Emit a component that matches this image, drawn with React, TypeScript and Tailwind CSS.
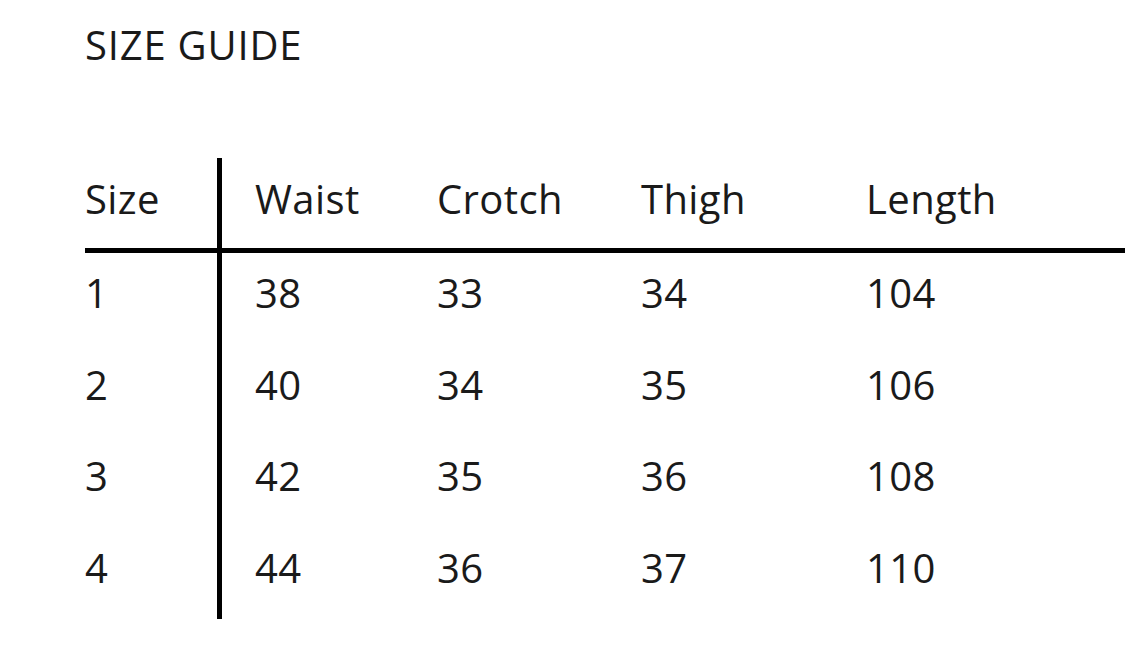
import React from "react";

const headers = ["Size", "Waist", "Crotch", "Thigh", "Length"];
const rows = [
  ["1", "38", "33", "34", "104"],
  ["2", "40", "34", "35", "106"],
  ["3", "42", "35", "36", "108"],
  ["4", "44", "36", "37", "110"],
];

function Cell({ col, text, header }: { col: number; text: string; header?: boolean }) {
  const base = header ? "h-[90px] pt-[21px]" : "h-[91.5px] pt-[20px]";
  const colCls =
    col === 0
      ? "border-r-[5px] border-black"
      : col === 1
      ? "pl-[33px]"
      : "";
  return <div className={`${base} ${colCls} leading-[40px] whitespace-nowrap`}>{text}</div>;
}

export default function App() {
  return (
    <div
      className="w-[1125px] h-[660px] bg-white text-[#1a1a1a] overflow-hidden pl-[85px] font-normal"
      style={{ fontFamily: '"Open Sans", "Noto Sans", sans-serif' }}
    >
      <div className="pt-[25px] text-[40px] leading-[40px] tracking-[0.8px]">SIZE GUIDE</div>
      <div className="mt-[93px] grid grid-cols-[137px_215px_204px_225px_1fr] text-[40px] tracking-[0.4px]">
        {headers.map((h, i) => (
          <Cell key={h} col={i} text={h} header />
        ))}
        <div className="col-span-5 h-[5px] bg-black" />
        {rows.map((r, ri) =>
          r.map((v, ci) => <Cell key={`${ri}-${ci}`} col={ci} text={v} />)
        )}
      </div>
    </div>
  );
}
